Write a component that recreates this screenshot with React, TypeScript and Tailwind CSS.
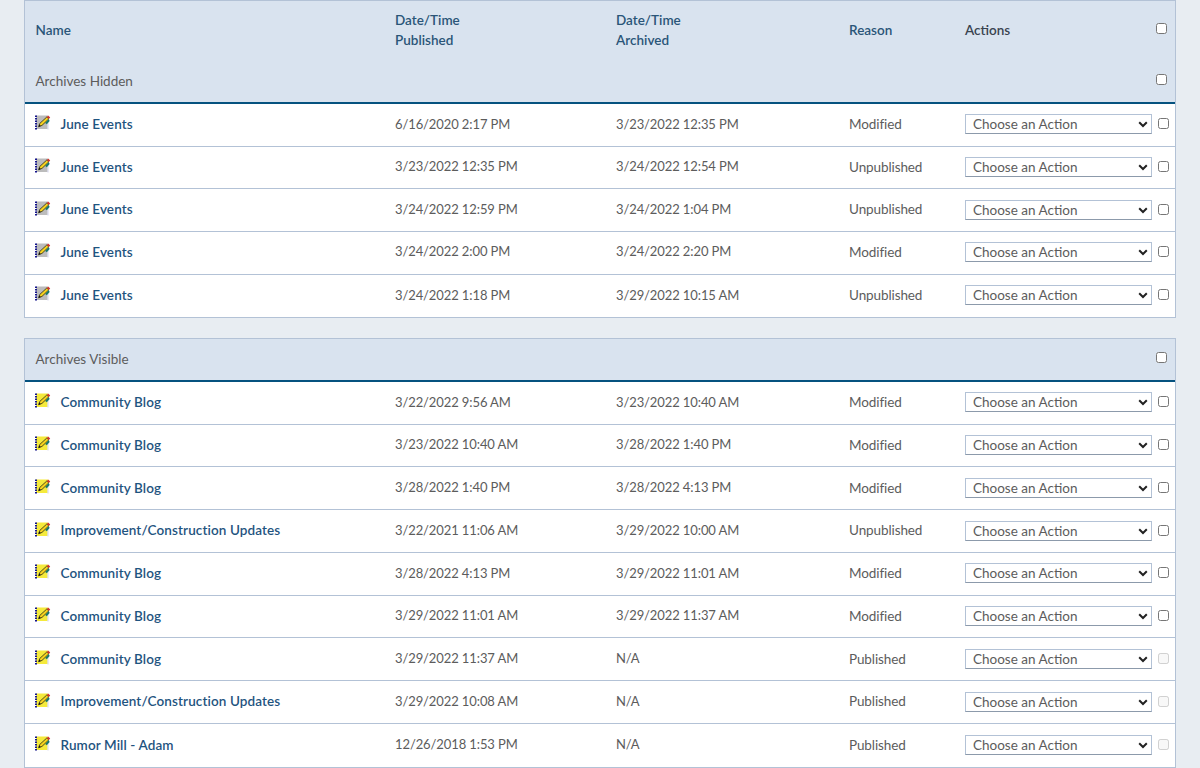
const font = "font-['Lato','Liberation_Sans',sans-serif]";

type Row = { name: string; pub: string; arch: string; reason: string; off?: boolean };

const hidden: Row[] = [
  { name: "June Events", pub: "6/16/2020 2:17 PM", arch: "3/23/2022 12:35 PM", reason: "Modified" },
  { name: "June Events", pub: "3/23/2022 12:35 PM", arch: "3/24/2022 12:54 PM", reason: "Unpublished" },
  { name: "June Events", pub: "3/24/2022 12:59 PM", arch: "3/24/2022 1:04 PM", reason: "Unpublished" },
  { name: "June Events", pub: "3/24/2022 2:00 PM", arch: "3/24/2022 2:20 PM", reason: "Modified" },
  { name: "June Events", pub: "3/24/2022 1:18 PM", arch: "3/29/2022 10:15 AM", reason: "Unpublished" },
];

const visible: Row[] = [
  { name: "Community Blog", pub: "3/22/2022 9:56 AM", arch: "3/23/2022 10:40 AM", reason: "Modified" },
  { name: "Community Blog", pub: "3/23/2022 10:40 AM", arch: "3/28/2022 1:40 PM", reason: "Modified" },
  { name: "Community Blog", pub: "3/28/2022 1:40 PM", arch: "3/28/2022 4:13 PM", reason: "Modified" },
  { name: "Improvement/Construction Updates", pub: "3/22/2021 11:06 AM", arch: "3/29/2022 10:00 AM", reason: "Unpublished" },
  { name: "Community Blog", pub: "3/28/2022 4:13 PM", arch: "3/29/2022 11:01 AM", reason: "Modified" },
  { name: "Community Blog", pub: "3/29/2022 11:01 AM", arch: "3/29/2022 11:37 AM", reason: "Modified" },
  { name: "Community Blog", pub: "3/29/2022 11:37 AM", arch: "N/A", reason: "Published", off: true },
  { name: "Improvement/Construction Updates", pub: "3/29/2022 10:08 AM", arch: "N/A", reason: "Published", off: true },
  { name: "Rumor Mill - Adam", pub: "12/26/2018 1:53 PM", arch: "N/A", reason: "Published", off: true },
];

function EditIcon({ yellow }: { yellow: boolean }) {
  return (
    <svg width="16" height="15" viewBox="0 0 16 15" className="shrink-0">
      <rect x="1" y="0.5" width="12" height="13.5" fill={yellow ? "#f5ea3c" : "#bcbcbc"} />
      <path d="M1 0.5v14" stroke="#14148c" strokeWidth="2" strokeDasharray="1.5 1" />
      <path d="M13 5v9.5" stroke="#dfe0f2" strokeWidth="1.4" />
      <path d="M3.6 11.8 L4.8 8.4 L11.8 2 L13.8 3.9 L7 10.4 Z" fill="#f6d21e" stroke="#2a2a14" strokeWidth="0.8" />
      <path d="M11.8 2 L13.8 3.9 L15.2 2.4 L13.2 0.4 Z" fill="#d0362c" />
      <path d="M3.6 11.8 L4.3 9.6 L5.8 11 Z" fill="#111" />
      <path d="M10.2 8 L13.8 3.9 L14.6 6 L11.8 9.2 Z" fill="#17796c" />
    </svg>
  );
}

function Check({ disabled, cls }: { disabled?: boolean; cls: string }) {
  return <input type="checkbox" disabled={disabled} className={cls} />;
}

function DataRow({ r, yellow, h }: { r: Row; yellow: boolean; h: string }) {
  return (
    <div className={`grid grid-cols-[370px_221px_233px_116px_210px] items-center ${h} border-b border-[#b3c2d6] last:border-b-0 text-[13.5px] text-[#5c5c5c]`}>
      <div className="flex items-center pl-[10px] -mt-[1px]">
        <span className="w-[25.5px] -mt-[3px]"><EditIcon yellow={yellow} /></span>
        <span className="font-semibold text-[#1f5480] tracking-[0.11px]">{r.name}</span>
      </div>
      <div className="-mt-[1px] text-[13px] tracking-[-0.1px]">{r.pub}</div>
      <div className="-mt-[1px] text-[13px] tracking-[-0.1px]">{r.arch}</div>
      <div className="-mt-[1px] tracking-[-0.1px]">{r.reason}</div>
      <div className="flex items-center">
        <div className="relative w-[187px] h-[20px] -mt-[1px]">
          <select className="appearance-none w-full h-full border border-[#b3c2d6] border-b-[#8c9aab] bg-white pl-[7px] text-[13.5px] leading-[18px] text-[#5c5c5c] block">
            <option>Choose an Action</option>
          </select>
          <svg width="10" height="7" viewBox="0 0 10 7" className="absolute right-[4px] top-[7px] pointer-events-none">
            <path d="M1.2 1.3 L5 5 L8.8 1.3" fill="none" stroke="#222" strokeWidth="2" />
          </svg>
        </div>
        <Check disabled={r.off} cls="ml-[6px] -mt-[2px] w-[11px] h-[11px]" />
      </div>
    </div>
  );
}

function GroupHeader({ label }: { label: string }) {
  return (
    <div className="flex items-center justify-between bg-[#d9e3ef] h-[43px] border-b-2 border-[#05527f] pl-[10.5px] pr-[8px] text-[13.5px] text-[#5c5c5c]">
      <span className="-mt-[1px]">{label}</span>
      <Check cls="-mt-[4px] w-[11px] h-[11px]" />
    </div>
  );
}

export default function App() {
  return (
    <div className={`${font} h-[768px] overflow-hidden bg-[#e8edf2] px-6`}>
      <div className="border border-[#b3c2d6] bg-white">
        <div className="grid grid-cols-[370px_221px_233px_116px_210px] items-start bg-[#d9e3ef] h-[60px] pt-[9px] text-[13.5px] font-semibold leading-[20px] text-[#2a5578]">
          <div className="pl-[10.5px] pt-[10px]">Name</div>
          <div>Date/Time<br />Published</div>
          <div>Date/Time<br />Archived</div>
          <div className="pt-[10px]">Reason</div>
          <div className="pt-[10px] flex items-start justify-between pr-[8px] text-[#3a4450]">
            <span>Actions</span>
            <Check cls="mt-[3px] w-[11px] h-[11px]" />
          </div>
        </div>
        <GroupHeader label="Archives Hidden" />
        {hidden.map((r, i) => (
          <DataRow key={i} r={r} yellow={false} h="h-[42.65px]" />
        ))}
      </div>
      <div className="h-[19.75px]" />
      <div className="border border-[#b3c2d6] bg-white">
        <GroupHeader label="Archives Visible" />
        {visible.map((r, i) => (
          <DataRow key={i} r={r} yellow={true} h="h-[42.75px]" />
        ))}
      </div>
    </div>
  );
}
